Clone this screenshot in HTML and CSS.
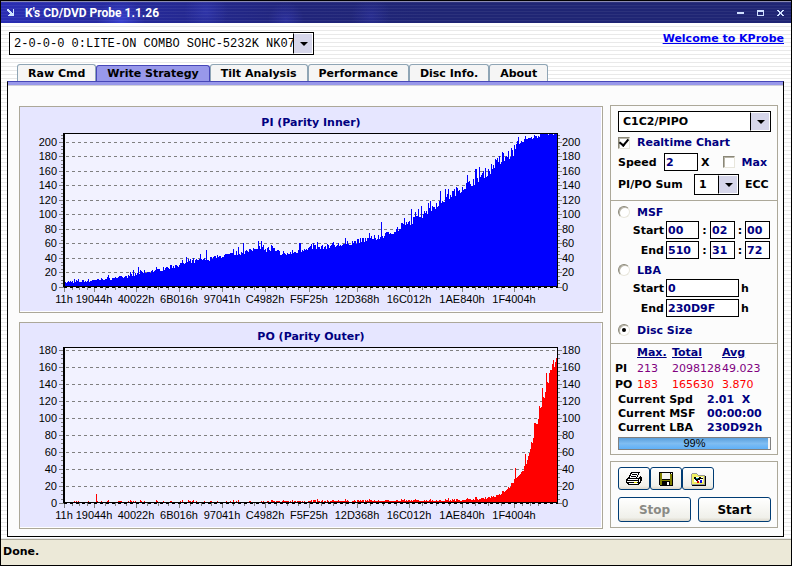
FILE: index.html
```html
<!DOCTYPE html>
<html lang="en">
<head>
    <meta charset="UTF-8">
    <meta name="viewport" content="width=device-width, initial-scale=1.0">
    <title>K's CD/DVD Probe 1.1.26</title>
    <link rel="stylesheet" href="styles.css">
</head>
<body>
    <div class="window">
        <header class="titlebar">
            <svg class="app-icon" width="8" height="8" viewBox="0 0 8 8" shape-rendering="crispEdges">
                <path d="M0 0h2v1h1v1h1v1h1v1h1V0h1v7H1V6h1V5h1V4H2V3H1V2H0z" fill="#cfe3ff"/>
            </svg>
            <h1>K's CD/DVD Probe 1.1.26</h1>
            <div class="window-buttons">
                <button type="button" aria-label="Minimize">
                    <svg width="8" height="8" viewBox="0 0 8 8" shape-rendering="crispEdges"><path d="M0 3h7v2H0z" fill="#cfdfff"/></svg>
                </button>
                <button type="button" aria-label="Maximize">
                    <svg width="8" height="8" viewBox="0 0 8 8" shape-rendering="crispEdges"><path d="M0 1h7v6H0zM1 3v3h5V3z" fill="#cfdfff" fill-rule="evenodd"/></svg>
                </button>
                <button type="button" aria-label="Close">
                    <svg width="8" height="8" viewBox="0 0 8 8" shape-rendering="crispEdges"><path d="M0 1h2v1h1v1h1V2h1V1h2v1H6v1H5v2h1v1h1v1H5V6H4V5H3v1H2v1H0V6h1V5h1V3H1V2H0z" fill="#cfdfff"/></svg>
                </button>
            </div>
        </header>

        <main class="main">
            <div class="toolbar">
                <div class="combo drive-combo">
                    <select aria-label="Drive">
                        <option>2-0-0-0 0:LITE-ON COMBO SOHC-5232K NK07</option>
                    </select>
                </div>
                <a href="#" class="welcome">Welcome to KProbe</a>
            </div>

            <nav class="tabs">
                <button type="button" class="tab">Raw Cmd</button>
                <button type="button" class="tab active">Write Strategy</button>
                <button type="button" class="tab">Tilt Analysis</button>
                <button type="button" class="tab">Performance</button>
                <button type="button" class="tab">Disc Info.</button>
                <button type="button" class="tab">About</button>
            </nav>

            <div class="page">
                <div class="charts">
                    <section class="chart-panel">
                        <svg class="chart" id="pi-chart" viewBox="0 0 582 205" role="img" aria-label="PI (Parity Inner)"></svg>
                    </section>
                    <section class="chart-panel">
                        <svg class="chart" id="po-chart" viewBox="0 0 582 205" role="img" aria-label="PO (Parity Outer)"></svg>
                    </section>
                </div>

                <aside class="sidebar">
                    <div class="box">
                        <div class="group">
                            <div class="combo mode-combo">
                                <select aria-label="Mode"><option>C1C2/PIPO</option></select>
                            </div>
                            <label class="check"><input type="checkbox" checked> Realtime Chart</label>
                            <div class="row speed-row">
                                <label for="speed">Speed</label>
                                <input type="text" id="speed" class="field speed" value="2">
                                <span>X</span>
                                <label class="check max"><input type="checkbox"> Max</label>
                            </div>
                            <div class="row sum-row">
                                <label for="sum">PI/PO Sum</label>
                                <div class="combo sum-combo">
                                    <select id="sum"><option>1</option></select>
                                </div>
                                <span class="ecc">ECC</span>
                            </div>
                        </div>

                        <div class="group range">
                            <label class="check"><input type="radio" name="range"> MSF</label>
                            <div class="row msf">
                                <label for="msf-start">Start</label>
                                <input type="text" id="msf-start" class="field" value="00">
                                <span>:</span>
                                <input type="text" aria-label="Start seconds" class="field" value="02">
                                <span>:</span>
                                <input type="text" aria-label="Start frames" class="field" value="00">
                            </div>
                            <div class="row msf">
                                <label for="msf-end">End</label>
                                <input type="text" id="msf-end" class="field" value="510">
                                <span>:</span>
                                <input type="text" aria-label="End seconds" class="field" value="31">
                                <span>:</span>
                                <input type="text" aria-label="End frames" class="field" value="72">
                            </div>
                            <label class="check"><input type="radio" name="range"> LBA</label>
                            <div class="row lba">
                                <label for="lba-start">Start</label>
                                <input type="text" id="lba-start" class="field" value="0">
                                <span>h</span>
                            </div>
                            <div class="row lba">
                                <label for="lba-end">End</label>
                                <input type="text" id="lba-end" class="field" value="230D9F">
                                <span>h</span>
                            </div>
                            <label class="check"><input type="radio" name="range" checked> Disc Size</label>
                        </div>

                        <div class="group stats">
                            <table class="totals">
                                <thead>
                                    <tr><td></td><th>Max.</th><th>Total</th><th>Avg</th></tr>
                                </thead>
                                <tbody>
                                    <tr class="pi"><th>PI</th><td>213</td><td>2098128</td><td>49.023</td></tr>
                                    <tr class="po"><th>PO</th><td>183</td><td>165630</td><td>3.870</td></tr>
                                </tbody>
                            </table>
                            <dl class="current">
                                <dt>Current Spd</dt><dd>2.01&nbsp; X</dd>
                                <dt>Current MSF</dt><dd>00:00:00</dd>
                                <dt>Current LBA</dt><dd>230D92h</dd>
                            </dl>
                            <div class="progress" role="progressbar" aria-label="Progress" aria-valuenow="99">
                                <div class="bar" style="width: 99%"></div>
                                <span>99%</span>
                            </div>
                        </div>
                    </div>

                    <div class="box actions">
                        <div class="icon-buttons">
                            <button type="button" aria-label="Print">
                                <svg width="18" height="16" viewBox="0 0 18 16" shape-rendering="crispEdges">
                                    <path d="M6 1h9v1h-1v2h-1v2h-1v1H3V6h1V4h1V2h1z" fill="#000"/>
                                    <path d="M7 2h6v1H7zM6 4h6v1H6zM5 6h6v1H5zM6 3h7v1H6zM5 5h7v1H5z" fill="#fff"/>
                                    <path d="M7 3h5v1H7zM6 5h5v1H6z" fill="#000"/>
                                    <path d="M2 7h12V6h1V5h1v1h1v4h-1v2h-1v1h-1v1H3v-1H2v-1H1V8h1z" fill="#000"/>
                                    <path d="M3 8h10v1H3zM2 10h11v1H2zM4 12h9v1H4zM14 8h1v3h-1z" fill="#fff"/>
                                    <path d="M9 11h3v1H9z" fill="#e6e600"/>
                                </svg>
                            </button>
                            <button type="button" aria-label="Save">
                                <svg width="14" height="14" viewBox="0 0 14 14" shape-rendering="crispEdges">
                                    <path d="M0 0h14v14H1v-1H0z" fill="#000"/>
                                    <path d="M1 1h2v7h8V2h2v11h-2V9H3v4H1z" fill="#808000"/>
                                    <path d="M3 1h8v6H3z" fill="#f4f4f0"/>
                                    <path d="M12 1h1v1h-1zM8 10h2v3H8z" fill="#fff"/>
                                </svg>
                            </button>
                            <button type="button" aria-label="Save picture">
                                <svg width="15" height="14" viewBox="0 0 15 14" shape-rendering="crispEdges">
                                    <path d="M1 1h5v1h1v1h7v10H0V2h1z" fill="#999"/>
                                    <path d="M1 2h5v1h1v1h6v8H1z" fill="#f0f060"/>
                                    <path d="M14 4h1v10H1v-1h13z" fill="#000"/>
                                    <path d="M3 5h9v5H3z" fill="#fff"/>
                                    <path d="M3 5h2v1h1v1h1V6h1V5h2v2H9v1H7v1H5V8H4V7H3zM10 6h2v1h-2z" fill="#000"/>
                                    <path d="M5 6h2v1H5z" fill="#00a0a0"/>
                                    <path d="M6 9h2v2H6z" fill="#e00000"/>
                                    <path d="M9 8h2v3H9z" fill="#1010e0"/>
                                </svg>
                            </button>
                        </div>
                        <div class="run-buttons">
                            <button type="button" disabled>Stop</button>
                            <button type="button">Start</button>
                        </div>
                    </div>
                </aside>
            </div>
        </main>

        <footer class="statusbar">Done.</footer>
    </div>

    <script src="chart.js"></script>
</body>
</html>
```

FILE: styles.css
```css
* {
    box-sizing: border-box;
}
body {
    margin: 0;
    font-family: "DejaVu Sans", Verdana, sans-serif;
    font-size: 11px;
    font-weight: bold;
    color: #000;
}
button,
input,
select {
    font: inherit;
    color: inherit;
    margin: 0;
    padding: 0;
}
.window {
    min-height: 100vh;
    display: flex;
    flex-direction: column;
    border: 1px solid #000;
}

/* title bar */
.titlebar {
    display: flex;
    align-items: center;
    height: 22px;
    padding: 0 6px;
    border-top: 1px solid #8a8ab0;
    color: #fff;
    background:
        repeating-linear-gradient(rgba(255, 255, 255, 0.06) 0 1px, transparent 1px 3px),
        radial-gradient(circle at 120px 20px, rgba(70, 80, 240, 0.6), transparent 24px),
        radial-gradient(circle at 205px 10px, rgba(70, 80, 230, 0.3), transparent 22px),
        radial-gradient(circle at 285px 18px, rgba(60, 65, 200, 0.4), transparent 18px),
        radial-gradient(circle at 370px 14px, rgba(60, 65, 200, 0.3), transparent 20px),
        linear-gradient(to right, #2a2eb4, #20247a 300px, #1f2574 440px);
}
.titlebar h1 {
    flex: 1;
    margin: 0 0 0 10px;
    font: bold 12px Roboto, sans-serif;
}
.window-buttons {
    display: flex;
    gap: 12px;
}
.window-buttons button {
    display: flex;
    border: none;
    background: none;
}

/* main area */
.main {
    flex: 1;
    display: flex;
    flex-direction: column;
    padding: 9px 7px 2px 6px;
    background: repeating-linear-gradient(#fff 0 3px, #e9e9e9 3px 4px);
}
.toolbar {
    display: flex;
    justify-content: space-between;
    align-items: flex-start;
    padding-left: 2px;
}
.welcome {
    color: #0000f0;
}
.combo {
    position: relative;
    display: flex;
    border: 1px solid #000;
    background-color: #fff;
}
.combo select {
    flex: 1;
    min-width: 0;
    appearance: none;
    border: none;
    border-radius: 0;
    background: none;
    padding: 0 18px 0 4px;
}
.combo::before {
    content: "";
    position: absolute;
    top: 0;
    right: 0;
    bottom: 0;
    width: 18px;
    border: 1px solid #fff;
    border-left: 1px solid #000;
    background-color: #d6d6ea;
    pointer-events: none;
}
.combo::after {
    content: "";
    position: absolute;
    top: 50%;
    right: 5px;
    margin-top: -2px;
    border: 4px solid transparent;
    border-top-color: #000;
    border-bottom: none;
    pointer-events: none;
}
.drive-combo {
    width: 305px;
    height: 23px;
    font-family: "Liberation Mono", "Courier New", monospace;
    font-size: 12px;
    font-weight: normal;
}
.tabs {
    display: flex;
    align-items: flex-end;
    margin-top: 9px;
    padding-left: 10px;
}
.tab {
    height: 17px;
    padding: 0 10px;
    border: 1px solid #8fa5b5;
    border-bottom: none;
    border-radius: 3px 3px 0 0;
    background-color: #f5f5f5;
}
.tab.active {
    height: 16px;
    border-color: #4747b8;
    background-color: #9898ea;
}
.page {
    flex: 1;
    display: flex;
    gap: 7px;
    padding: 20px 5px 7px 11px;
    border: 1px solid #000;
    border-top: 1px solid #4747b8;
    background-color: #fcfcfc;
    box-shadow: inset 0 3px #9898ea, inset 0 4px #d0d0d8;
}

/* charts */
.charts {
    flex: 1;
    min-width: 0;
    display: flex;
    flex-direction: column;
    gap: 9px;
    padding-top: 4px;
}
.chart-panel {
    border: 1px solid #aca899;
    box-shadow: inset -1px -1px #fff;
    background-color: #e6e6ff;
    background-clip: padding-box;
}
.chart {
    display: block;
    width: 100%;
    font-family: "Liberation Sans", Arial, sans-serif;
    font-size: 11px;
    font-weight: normal;
}
.chart .title {
    font-family: "DejaVu Sans", Verdana, sans-serif;
    font-weight: bold;
    fill: #000080;
}

/* sidebar */
.sidebar {
    width: 168px;
    display: flex;
    flex-direction: column;
    gap: 6px;
    padding-top: 3px;
}
.box {
    border: 1px solid #aca899;
}
.group {
    padding: 5px 6px 5px 7px;
}
.group + .group {
    border-top: 1px solid #aca899;
}
.row {
    display: flex;
    align-items: center;
}
.mode-combo {
    height: 21px;
}
.check {
    display: flex;
    align-items: center;
    height: 21px;
    color: #000080;
}
.check input {
    appearance: none;
    display: grid;
    place-items: center;
    width: 12px;
    height: 12px;
    margin-right: 7px;
    border: 1px solid;
    border-color: #8a8778 #e8e6dc #e8e6dc #8a8778;
    background-color: #fff;
    box-shadow: inset 1px 1px #b8b5a8;
}
.check input[type="checkbox"]:checked::before {
    content: "";
    width: 4px;
    height: 7px;
    margin-top: -2px;
    border: solid #000;
    border-width: 0 2px 2px 0;
    transform: rotate(40deg);
}
.check input[type="radio"] {
    border-radius: 50%;
}
.check input[type="radio"]:checked::before {
    content: "";
    width: 4px;
    height: 4px;
    border-radius: 50%;
    background-color: #000;
}
.field {
    width: 100%;
    min-width: 0;
    height: 18px;
    padding: 0 1px;
    border: 1px solid #000;
    border-radius: 0;
    background-color: #fff;
    color: #000080;
}
.speed-row {
    gap: 3px;
}
.speed-row label:first-child {
    width: 43px;
}
.field.speed {
    width: 34px;
}
.check.max {
    height: 18px;
    margin-left: auto;
    padding-right: 4px;
}
.sum-row {
    margin-top: 3px;
}
.sum-row label {
    width: 76px;
}
.sum-combo {
    width: 45px;
    height: 21px;
}
.ecc {
    margin-left: 6px;
}
.range {
    padding-top: 2px;
    padding-bottom: 4px;
}
.range .check {
    height: 18px;
}
.msf,
.lba {
    display: grid;
    gap: 2px;
    margin-bottom: 2px;
}
.msf {
    grid-template-columns: 46px 33px 7px 25px 6px 25px;
}
.lba {
    grid-template-columns: 46px 73px 1fr;
}
.msf span {
    text-align: center;
}
.msf label,
.lba label {
    text-align: right;
}
.lba + .check {
    margin-top: 4px;
}
.totals {
    width: 100%;
    border-collapse: collapse;
    table-layout: fixed;
    line-height: 16px;
}
.totals th,
.totals td {
    padding: 0;
    text-align: left;
    white-space: nowrap;
}
.totals td {
    font-weight: normal;
}
.totals thead td {
    width: 22px;
}
.totals thead th {
    color: #000080;
    text-decoration: underline;
}
.totals thead th:nth-child(2) {
    width: 35px;
}
.totals thead th:nth-child(3) {
    width: 50px;
}
.totals .pi td {
    color: #800080;
}
.totals .po td {
    color: #ff0000;
}
.stats {
    padding: 1px 6px 4px 4px;
}
.current {
    display: grid;
    grid-template-columns: 89px 1fr;
    margin: 0 0 2px 3px;
    line-height: 14px;
    white-space: nowrap;
}
.current dd {
    margin: 0;
    color: #000080;
}
.progress {
    display: grid;
    height: 13px;
    margin-left: 3px;
    border: 1px solid #808080;
    background-color: #f4f4f4;
}
.progress .bar,
.progress span {
    grid-area: 1 / 1;
}
.progress .bar {
    background: linear-gradient(#5a9fdc, #7fbdf2 50%, #5fb0f8);
}
.progress span {
    font: 11px/11px "Liberation Sans", Arial, sans-serif;
    text-align: center;
}
.actions {
    padding: 5px 6px 5px 7px;
}
.actions button {
    display: flex;
    align-items: center;
    justify-content: center;
    border: 1px solid #003c74;
    border-radius: 3px;
    background: linear-gradient(#fff, #f0f0ea 85%, #dcd8cc);
}
.icon-buttons {
    display: flex;
}
.icon-buttons button {
    width: 32px;
    height: 23px;
}
.run-buttons {
    display: grid;
    grid-template-columns: 1fr 1fr;
    gap: 7px;
    margin-top: 7px;
}
.run-buttons button {
    height: 25px;
    font-size: 12px;
}
.run-buttons button:disabled {
    color: #8a8a85;
}

.statusbar {
    height: 26px;
    padding: 3px 2px;
    border-top: 1px solid #aca899;
    background-color: #ece9d8;
    line-height: 18px;
}
```

FILE: chart.js
```javascript
var LEFT = 44;
var RIGHT = 537;
var BASE = 180;

var ticks = [
    [44, '11h'], [74, '19044h'], [116, '40022h'], [159, '6B016h'], [202, '97041h'],
    [245, 'C4982h'], [289, 'F5F25h'], [337, '12D368h'], [389, '16C012h'],
    [442, '1AE840h'], [494, '1F4004h']
];

// [x, errors] along the curve
var piCurve = [
    [44, 7], [60, 8], [74, 9], [85, 11], [100, 13], [110, 15], [120, 19], [140, 24],
    [160, 31], [180, 37], [200, 42], [220, 47], [230, 50], [238, 56], [245, 52],
    [255, 51], [263, 44], [270, 47], [280, 49], [285, 54], [300, 55], [320, 58],
    [340, 64], [360, 69], [380, 81], [400, 98], [420, 118], [440, 136], [458, 150],
    [475, 168], [490, 184], [502, 201], [515, 207], [524, 212], [537, 213]
];
var piPeaks = {
    113: 24, 118: 27, 166: 41, 180: 45, 186: 51, 223: 60, 238: 63, 241: 63, 279: 60,
    280: 60, 361: 90, 391: 108, 398: 108, 401: 112, 408: 116, 420: 132, 425: 135,
    428: 135, 459: 165, 475: 177, 477: 178, 479: 181
};
var poCurve = [
    [44, 1], [240, 1], [260, 2], [420, 3], [442, 4], [460, 5], [470, 7], [478, 9],
    [485, 14], [490, 20], [494, 27], [498, 30], [502, 38], [506, 45], [510, 63],
    [514, 82], [516, 92], [520, 108], [524, 126], [528, 146], [532, 158], [535, 168],
    [537, 174]
];
var poPeaks = {
    76: 10, 495: 41, 505: 58, 511: 72, 514: 94, 515: 94, 519: 114, 522: 135,
    526: 153, 529: 153, 533: 168, 537: 174
};

function valueAt(curve, x) {
    for (var i = 1; i < curve.length; i++) {
        if (x <= curve[i][0]) {
            var a = curve[i - 1], b = curve[i];
            return a[1] + (b[1] - a[1]) * (x - a[0]) / (b[0] - a[0]);
        }
    }
    return curve[curve.length - 1][1];
}

function line(x1, y1, x2, y2, color, extra) {
    return '<line x1="' + x1 + '" y1="' + y1 + '" x2="' + x2 + '" y2="' + y2 +
        '" stroke="' + color + '" ' + (extra || '') + '/>';
}

function drawChart(id, o) {
    var seed = 7;
    function random() {
        seed = (seed * 16807) % 2147483647;
        return seed / 2147483647;
    }
    function y(value) {
        return BASE - Math.round(value * o.scale);
    }

    var lines = '', labels = '', v, x, i, j;

    // vertical axes
    for (v = 0; v <= o.max; v += o.minor) {
        var major = v % 20 === 0;
        var len = major ? 4 : 2;
        var py = y(v) + 0.5;
        if (major) {
            if (v > 0) {
                lines += line(LEFT + 2, py, RIGHT, py, '#808080', 'stroke-dasharray="3 3"');
            }
            labels += '<text x="37" y="' + (y(v) + 4) + '" text-anchor="end">' + v + '</text>';
            labels += '<text x="542" y="' + (y(v) + 4) + '">' + v + '</text>';
        }
        lines += line(LEFT - 1 - len, py, LEFT, py, '#808080');
        lines += line(RIGHT + 1, py, RIGHT + 1 + len, py, '#808080');
    }

    // errors, one column per pixel
    var path = '';
    for (x = LEFT + 1; x <= RIGHT; x++) {
        v = valueAt(o.curve, x);
        v += (random() - 0.5) * o.noise(v, x);
        if (random() > 0.85) {
            v += random() * o.noise(v, x);
        }
        v = o.peaks[x] || Math.max(0, Math.min(v, o.top));
        path += 'M' + x + ' ' + BASE + 'V' + y(v) + 'h1V' + BASE + 'z';
    }

    // bottom axis
    for (i = 0; i < ticks.length; i++) {
        x = ticks[i][0];
        lines += line(x + 0.5, BASE, x + 0.5, BASE + 5, '#808080');
        labels += '<text x="' + x + '" y="196" text-anchor="middle">' + ticks[i][1] + '</text>';
        var next = i + 1 < ticks.length ? ticks[i + 1][0] : 526;
        for (j = 1; j < 4; j++) {
            var mx = Math.round(x + (next - x) * j / 4) + 0.5;
            lines += line(mx, BASE, mx, BASE + 3, '#808080');
        }
    }

    var top = y(o.top);
    document.getElementById(id).innerHTML =
        '<rect x="44" y="' + top + '" width="494" height="' + (BASE - top) + '" fill="#f2f2ff"/>' +
        '<g shape-rendering="crispEdges">' + lines +
        '<path d="' + path + '" fill="' + o.color + '"/>' +
        line(LEFT, top + 0.5, RIGHT + 1, top + 0.5, '#000') +
        line(LEFT, top, LEFT, BASE, '#000', 'stroke-width="2"') +
        line(RIGHT + 0.5, top, RIGHT + 0.5, BASE, '#000') +
        line(LEFT, BASE - 0.5, RIGHT + 1, BASE - 0.5, '#000') +
        line(LEFT, BASE + 0.5, RIGHT + 1, BASE + 0.5, '#000', 'stroke-dasharray="3 3"') +
        '</g>' + labels +
        '<text class="title" x="291" y="' + o.titleY + '" text-anchor="middle">' + o.title + '</text>';
}

drawChart('pi-chart', {
    title: 'PI (Parity Inner)', titleY: 19, color: '#0000ff',
    scale: 0.725, max: 210, minor: 5, top: 213, curve: piCurve, peaks: piPeaks,
    noise: function (v) { return v > 195 ? 5 : 3 + v * 0.07; }
});
drawChart('po-chart', {
    title: 'PO (Parity Outer)', titleY: 17, color: '#ff0000',
    scale: 0.85, max: 180, minor: 5, top: 183, curve: poCurve, peaks: poPeaks,
    noise: function (v, x) { return x < 420 ? 2 : 2 + v * 0.05; }
});
```
